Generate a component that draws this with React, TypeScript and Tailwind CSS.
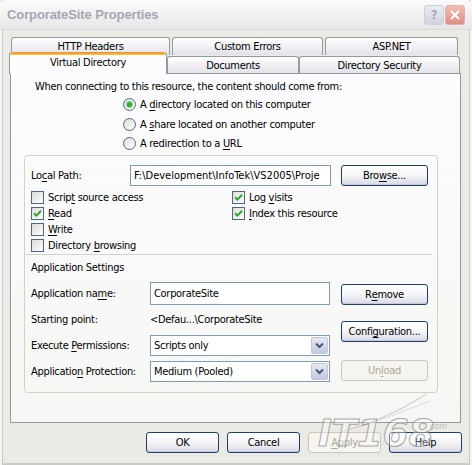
import React from "react";

const K = ({ children }: { children: React.ReactNode }) => (
  <span className="underline decoration-1 underline-offset-[2px]">{children}</span>
);

function Btn({
  children,
  disabled = false,
  wide = false,
}: {
  children: React.ReactNode;
  disabled?: boolean;
  wide?: boolean;
}) {
  const size = wide ? "w-[73px]" : "w-[87px]";
  return disabled ? (
    <div
      className={`${size} h-[21px] flex items-center justify-center rounded-[3px] border border-[#cac8bb] bg-[#f5f4ee] text-[#aca899]`}
    >
      {children}
    </div>
  ) : (
    <div
      className={`${size} h-[21px] flex items-center justify-center rounded-[3px] border border-[#1d3f6e] bg-gradient-to-b from-[#ffffff] via-[#f5f5f7] to-[#d9d9e6] text-black shadow-[inset_0_-1px_0_#c8c8d8]`}
    >
      {children}
    </div>
  );
}

function Check({ checked = false }: { checked?: boolean }) {
  return (
    <span className="w-[13px] h-[13px] shrink-0 border border-[#50658a] bg-gradient-to-br from-[#dcdcd7] to-[#ffffff] flex items-center justify-center">
      {checked && (
        <svg width="9" height="9" viewBox="0 0 9 9">
          <path d="M1 4.2 L3.4 6.6 L8 1.8" stroke="#2aa52a" strokeWidth="2" fill="none" />
        </svg>
      )}
    </span>
  );
}

function Radio({ on = false }: { on?: boolean }) {
  return (
    <span className="w-[13px] h-[13px] shrink-0 rounded-full border border-[#50658a] bg-gradient-to-br from-[#dcdcd7] to-[#ffffff] flex items-center justify-center">
      {on && <span className="w-[5px] h-[5px] rounded-full bg-[#3aa83a] shadow-[0_0_0_1px_#8fd08f]" />}
    </span>
  );
}

function Chevron() {
  return (
    <svg width="9" height="7" viewBox="0 0 9 7">
      <path d="M1 1.5 L4.5 5 L8 1.5" stroke="#4a5a7c" strokeWidth="2" fill="none" />
    </svg>
  );
}

function Select({ value }: { value: string }) {
  return (
    <div className="w-[180px] h-[21px] border border-[#7f9db9] bg-white flex items-center">
      <span className="flex-1 pl-[3px] text-black">{value}</span>
      <span className="w-[17px] h-[17px] mr-[1px] rounded-[2px] border border-[#c3c6da] bg-gradient-to-b from-[#e6e8f4] to-[#c5c9de] flex items-center justify-center">
        <Chevron />
      </span>
    </div>
  );
}

function Tab({
  label,
  w,
  back = false,
}: {
  label: string;
  w: string;
  back?: boolean;
}) {
  return (
    <div
      className={`${w} ${back ? "h-[18px]" : "h-[17px] mb-px"} rounded-t-[3px] border border-b-0 border-[#919b9c] bg-gradient-to-b from-[#ffffff] to-[#e2e2ea] flex items-center justify-center text-black`}
    >
      {label}
    </div>
  );
}

export default function App() {
  return (
    <div className="relative w-[472px] h-[465px] overflow-hidden bg-[#ebeae4] font-['DejaVu_Sans_Condensed','Liberation_Sans',sans-serif] text-[11px] leading-[13px] tracking-[-0.3px] text-black shadow-[inset_2px_0_0_#f4f4f2,inset_3px_0_0_#c9c9c6,inset_-2px_0_0_#f4f4f2,inset_-3px_0_0_#c9c9c6,inset_0_-2px_0_#c9c9c6]">
      {/* title bar */}
      <div className="h-[30px] flex items-center pl-[7px] pr-[7px] rounded-t-[6px] bg-gradient-to-b from-[#fbfbfb] via-[#f2f2f2] to-[#e6e6e6] border-b border-[#dadad6]">
        <span className="flex-1 font-bold text-[13px] leading-[16px] text-[#a6a6b2] font-['Liberation_Sans',sans-serif] tracking-[-0.1px]">
          CorporateSite Properties
        </span>
        <div className="flex gap-[1px] items-center">
          <span className="w-[20px] h-[20px] rounded-[3px] border border-[#cfcfdb] bg-gradient-to-b from-[#ececf3] to-[#d3d3e0] flex items-center justify-center text-[#a8a8ba] font-bold text-[13px]">
            ?
          </span>
          <span className="w-[20px] h-[20px] rounded-[3px] border border-[#e0b0ae] bg-gradient-to-b from-[#f0bcb4] to-[#dc8e84] flex items-center justify-center">
            <svg width="12" height="12" viewBox="0 0 12 12">
              <path d="M2 2 L10 10 M10 2 L2 10" stroke="#ffffff" strokeWidth="2" />
            </svg>
          </span>
        </div>
      </div>

      {/* tabs */}
      <div className="mt-[7px] flex pl-[11px] gap-[2px]">
        <Tab label="HTTP Headers" w="w-[159px]" back />
        <Tab label="Custom Errors" w="w-[151px]" back />
        <Tab label="ASP.NET" w="w-[133px]" back />
      </div>
      <div className="relative z-10 -mt-[3px] -mb-px flex items-end pl-[9px] h-[22px]">
        <div className="w-[158px] h-[22px] rounded-t-[3px] border border-b-0 border-[#919b9c] border-t-0 bg-[#fcfcfe] flex flex-col">
          <div className="h-[3px] rounded-t-[3px] bg-gradient-to-b from-[#e68b2c] to-[#ffc73c]" />
          <div className="flex-1 flex items-start justify-center pt-[1px]">Virtual Directory</div>
        </div>
        <Tab label="Documents" w="w-[132px]" />
        <Tab label="Directory Security" w="w-[161px]" />
      </div>

      {/* tab page */}
      <div className="ml-[10px] w-[451px] h-[350px] border border-[#919b9c] bg-gradient-to-b from-[#fcfcfe] to-[#f6f6f4] pt-[6px]">
        <div className="pl-[24px] h-[13px]">When connecting to this resource, the content should come from:</div>
        <div className="mt-[1px] pl-[112px] flex flex-col">
          <div className="h-[20px] flex items-center gap-[4px]">
            <Radio on />
            <span>
              A <K>d</K>irectory located on this computer
            </span>
          </div>
          <div className="h-[20px] flex items-center gap-[4px]">
            <Radio />
            <span>
              A <K>s</K>hare located on another computer
            </span>
          </div>
          <div className="h-[19px] flex items-center gap-[4px]">
            <Radio />
            <span>
              A redirection to a <K>U</K>RL
            </span>
          </div>
        </div>

        {/* group */}
        <div className="mt-[2px] ml-[13px] w-[414px] h-[238px] rounded-[4px] border border-[#d3d2c6] pt-[9px] pl-[6px]">
          <div className="flex items-center h-[21px]">
            <span className="w-[99px]">
              Lo<K>c</K>al Path:
            </span>
            <div className="w-[201px] h-[21px] border border-[#7f9db9] bg-white flex items-center pl-[3px] overflow-hidden whitespace-nowrap tracking-[0px]">
              F:\Development\InfoTek\VS2005\Proje
            </div>
            <div className="ml-[10px]">
              <Btn>
                Bro<K>w</K>se...
              </Btn>
            </div>
          </div>

          <div className="mt-[3px] grid grid-cols-[201px_1fr] auto-rows-[16px]">
            <div className="flex items-center gap-[4px]">
              <Check />
              <span>
                Scrip<K>t</K> source access
              </span>
            </div>
            <div className="flex items-center gap-[4px]">
              <Check checked />
              <span>
                Log <K>v</K>isits
              </span>
            </div>
            <div className="flex items-center gap-[4px]">
              <Check checked />
              <span>
                <K>R</K>ead
              </span>
            </div>
            <div className="flex items-center gap-[4px]">
              <Check checked />
              <span>
                <K>I</K>ndex this resource
              </span>
            </div>
            <div className="flex items-center gap-[4px]">
              <Check />
              <span>
                <K>W</K>rite
              </span>
            </div>
            <div />
            <div className="flex items-center gap-[4px]">
              <Check />
              <span>
                Directory <K>b</K>rowsing
              </span>
            </div>
          </div>

          <div className="mt-[1px] -ml-[6px] mr-[5px] h-px bg-[#d3d2c6]" />

          <div className="mt-[6px] h-[13px]">Application Settings</div>

          <div className="mt-[8px] flex gap-[11px]">
            <div className="w-[299px] flex flex-col">
              <div className="h-[23px] flex items-center">
                <span className="w-[119px]">
                  Application na<K>m</K>e:
                </span>
                <div className="w-[180px] h-[23px] border border-[#7f9db9] bg-white flex items-center pl-[3px]">
                  CorporateSite
                </div>
              </div>
              <div className="mt-[7px] h-[14px] flex items-center">
                <span className="w-[119px]">Starting point:</span>
                <span>&lt;Defau...\CorporateSite</span>
              </div>
              <div className="mt-[9px] h-[21px] flex items-center">
                <span className="w-[119px]">
                  Execute <K>P</K>ermissions:
                </span>
                <Select value="Scripts only" />
              </div>
              <div className="mt-[5px] h-[21px] flex items-center">
                <span className="w-[119px]">
                  Applicatio<K>n</K> Protection:
                </span>
                <Select value="Medium (Pooled)" />
              </div>
            </div>
            <div className="flex flex-col">
              <div className="mt-[2px]">
                <Btn>
                  R<K>e</K>move
                </Btn>
              </div>
              <div className="mt-[16px]">
                <Btn>
                  Confi<K>g</K>uration...
                </Btn>
              </div>
              <div className="mt-[18px]">
                <Btn disabled>
                  Un<K>l</K>oad
                </Btn>
              </div>
            </div>
          </div>
        </div>
      </div>

      {/* dialog buttons */}
      <div className="mt-[9px] flex justify-end gap-[8px] pr-[10px]">
        <Btn wide>OK</Btn>
        <Btn wide>Cancel</Btn>
        <Btn wide disabled>
          <K>A</K>pply
        </Btn>
        <Btn wide>Help</Btn>
      </div>

      {/* site watermark */}
      <div className="pointer-events-none absolute left-[314px] top-[392px] w-[140px] h-[66px] tracking-normal">
        <svg className="absolute left-0 top-0" width="140" height="66" viewBox="0 0 140 66">
          <path
            d="M28 40 C 58 30, 82 22, 112 2"
            stroke="#b8b8b8"
            strokeOpacity="0.6"
            strokeWidth="1.2"
            fill="none"
          />
          <path
            d="M44 35 C 66 28, 88 20, 116 9"
            stroke="#b8b8b8"
            strokeOpacity="0.45"
            strokeWidth="1"
            fill="none"
          />
        </svg>
        <span className="absolute left-[4px] top-[22px] italic font-bold text-[37px] leading-[40px] text-[rgba(255,255,255,0.35)] [-webkit-text-stroke:1px_rgba(140,140,140,0.75)] font-['DejaVu_Sans',sans-serif]">
          IT168
        </span>
        <span className="absolute left-[116px] top-[30px] italic text-[8px] leading-[10px] text-[rgba(150,150,150,0.6)] font-['DejaVu_Sans',sans-serif]">
          com
        </span>
      </div>
    </div>
  );
}
